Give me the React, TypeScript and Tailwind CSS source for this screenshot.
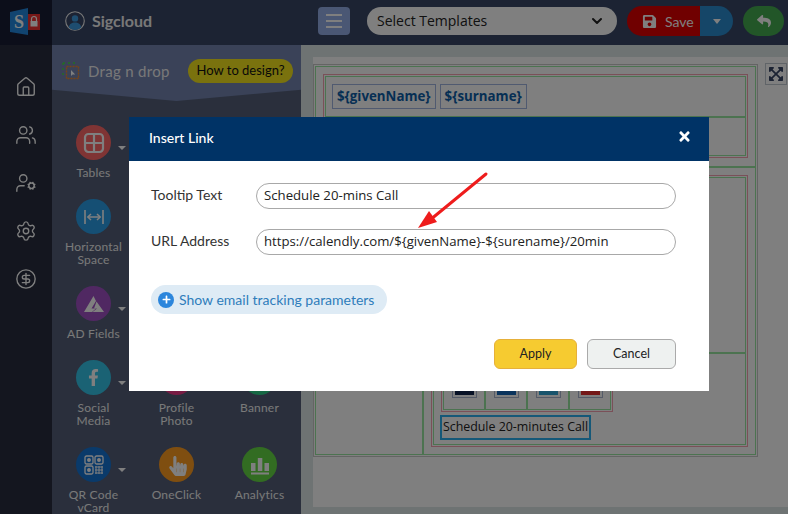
import React from "react";
import { House, Users, UserCog, Settings, CircleDollarSign, ChevronDown } from "lucide-react";
import { FaSave, FaReply, FaTimes, FaExpandArrowsAlt, FaFacebookF, FaHandPointer, FaPlus } from "react-icons/fa";

function Caret() {
  return <div className="absolute left-[42px] top-[21px] w-0 h-0 border-x-[4px] border-x-transparent border-t-[4px] border-t-white" />;
}

function Tool({ label, color, caret, children }: { label?: string[]; color?: string; caret?: boolean; children?: React.ReactNode }) {
  return (
    <div className="flex flex-col items-center pb-[20px]">
      {color ? (
        <div className="relative w-[35px] h-[35px]">
          <div className={"w-[35px] h-[35px] rounded-full flex items-center justify-center text-white " + color}>{children}</div>
          {caret ? <Caret /> : null}
        </div>
      ) : null}
      {label ? (
        <div className="mt-[6px] text-center text-[12px] leading-[13px] text-[#f2f2f2] tracking-[0.2px]">
          {label.map((l) => (
            <div key={l}>{l}</div>
          ))}
        </div>
      ) : null}
    </div>
  );
}

function Swatch({ color }: { color: string }) {
  return (
    <div className="flex-1 border-r-2 last:border-r-0 border-[#98e6a0] pl-[8px] pt-[6px] pb-[11px]">
      <div className="w-[25px] h-[30px] border border-[#aab6d0] p-[2px] bg-white">
        <div className={"h-full " + color} />
      </div>
    </div>
  );
}

export default function App() {
  return (
    <div className="relative w-[788px] h-[514px] overflow-hidden flex font-[Lato,sans-serif]">
      {/* rail */}
      <div className="w-[52px] shrink-0 bg-[#282c3e] flex flex-col items-center">
        <div className="w-full h-[45px] bg-[#181c34] flex items-center justify-center">
          <svg width="34" height="30" viewBox="0 0 34 30">
            <polygon points="1,4 19,0 19,27 1,24" fill="#2288e0" />
            <rect x="19" y="6" width="12" height="16" fill="#f03030" />
            <text x="10" y="20" textAnchor="middle" fontSize="18" fontWeight="700" fill="#fff" fontFamily="Liberation Serif, serif">S</text>
            <path d="M22.5 13v-2a2.5 2.5 0 0 1 5 0v2" fill="none" stroke="#fff" strokeWidth="1.2" />
            <rect x="21.5" y="13" width="7" height="5.5" fill="#fff" />
          </svg>
        </div>
        <div className="flex flex-col items-center gap-[26px] pt-[31px] text-white">
          <House size={22} strokeWidth={1.5} />
          <Users size={22} strokeWidth={1.5} />
          <UserCog size={22} strokeWidth={1.5} />
          <Settings size={22} strokeWidth={1.5} />
          <CircleDollarSign size={22} strokeWidth={1.5} />
        </div>
      </div>

      <div className="flex-1 flex flex-col min-w-0">
        {/* header */}
        <div className="h-[45px] shrink-0 bg-[#384666] flex items-center pb-[3px]">
          <div className="w-[249px] shrink-0 flex items-center pl-[13px] gap-[7px]">
            <svg width="20" height="20" viewBox="0 0 20 20">
              <circle cx="10" cy="10" r="9.3" fill="none" stroke="#f0f0f0" strokeWidth="1.1" />
              <circle cx="10" cy="7.4" r="3.2" fill="#3d9be0" />
              <path d="M3.8 16.5c.6-3.6 3-5 6.2-5s5.6 1.4 6.2 5a9 9 0 0 1-12.4 0z" fill="#3d9be0" />
            </svg>
            <span className="text-[16px] font-bold text-[#f0f0f0]">Sigcloud</span>
          </div>
          <div className="ml-[17px] w-[32px] h-[28px] rounded-[4px] bg-[#94aee8] flex flex-col items-center justify-center gap-[4px]">
            <div className="w-[16px] h-[2px] bg-white" />
            <div className="w-[16px] h-[2px] bg-white" />
            <div className="w-[16px] h-[2px] bg-white" />
          </div>
          <div className="ml-[17px] w-[250px] h-[28px] rounded-full bg-white flex items-center justify-between pl-[10px] pr-[12px] pb-[2px] text-[14px] text-[#222] font-['Open_Sans',sans-serif]">
            <span>Select Templates</span>
            <ChevronDown size={16} strokeWidth={3} className="text-[#222] mt-[2px]" />
          </div>
          <div className="ml-[10px] w-[106px] h-[30px] rounded-full overflow-hidden flex">
            <div className="w-[73px] bg-[#e00000] flex items-center pl-[15px] gap-[8px] text-white text-[14px]">
              <FaSave size={15} />
              <span>Save</span>
            </div>
            <div className="flex-1 bg-[#2a8cd0] flex items-center justify-center">
              <div className="w-0 h-0 border-x-[4px] border-x-transparent border-t-[5px] border-t-white" />
            </div>
          </div>
          <div className="ml-[10px] w-[41px] h-[30px] rounded-full bg-[#44ac50] flex items-center justify-center text-white">
            <FaReply size={14} />
          </div>
        </div>

        <div className="flex-1 flex min-h-0">
          {/* tools panel */}
          <div className="w-[249px] shrink-0 bg-[#545f78] flex flex-col overflow-hidden">
            <div className="h-[56px] shrink-0 bg-[#7484b0] [clip-path:polygon(0_0,100%_0,100%_80%,50%_100%,0_80%)] flex items-start pl-[10px] pt-[14px]">
              <svg width="18" height="19" viewBox="0 0 18 19" className="mt-[2px] shrink-0">
                <path d="M1 2h12M1 2v12" fill="none" stroke="#44dd44" strokeWidth="1.4" strokeDasharray="2 3" />
                <rect x="4.5" y="5.5" width="12" height="12" fill="none" stroke="#f08828" strokeWidth="1.4" strokeDasharray="2 1" />
                <path d="M9 9v6l1.6-1.4h2.6z" fill="#fff" />
              </svg>
              <span className="ml-[8px] w-[74px] shrink-0 mt-[2px] text-[15px] leading-[20px] text-[#f0f0f0] whitespace-nowrap tracking-[0.3px]">Drag n drop</span>
              <div className="ml-[26px] w-[105px] h-[24px] shrink-0 rounded-full bg-[#f4e41c] flex items-center justify-center text-[13px] text-[#111]">How to design?</div>
            </div>
            <div className="grid grid-cols-3 pt-[24px] shrink-0">
              <Tool label={["Tables"]} color="bg-[#ff6868]" caret>
                <svg width="22" height="22" viewBox="0 0 22 22" fill="none" stroke="#fff" strokeWidth="2.2">
                  <rect x="2" y="2" width="18" height="18" rx="3.5" />
                  <path d="M11 2v18M2 11h18" />
                </svg>
              </Tool>
              <div />
              <div />
              <Tool label={["Horizontal", "Space"]} color="bg-[#2a9ee8]">
                <svg width="24" height="20" viewBox="0 0 24 20" fill="none" stroke="#fff" strokeWidth="1.6">
                  <path d="M3 3v14M21 3v14M6 10h12" />
                  <path d="M9 7l-3.2 3L9 13M15 7l3.2 3L15 13" strokeWidth="1.5" />
                </svg>
              </Tool>
              <div />
              <div />
              <Tool label={["AD Fields"]} color="bg-[#a050c4]" caret>
                <svg width="22" height="18" viewBox="0 0 22 18" fill="#fff">
                  <path d="M10.5 1L1 17h8l4-3.5H8.5L13 6z" />
                  <path d="M13.5 6.5L21 17H9.5l4.5-3.5-3-.1z" />
                </svg>
              </Tool>
              <div />
              <div />
              <Tool label={["Social", "Media"]} color="bg-[#34c4e8]" caret>
                <FaFacebookF size={17} />
              </Tool>
              <Tool label={["Profile", "Photo"]} color="bg-[#f03888]" />
              <Tool label={["Banner"]} color="bg-[#2cd088]" />
              <Tool label={["QR Code", "vCard"]} color="bg-[#1474d4]" caret>
                <svg width="20" height="20" viewBox="0 0 20 20" fill="none" stroke="#fff" strokeWidth="1.3">
                  <rect x="1" y="1" width="8" height="8" rx="1.5" />
                  <rect x="11" y="1" width="8" height="8" rx="1.5" />
                  <rect x="1" y="11" width="8" height="8" rx="1.5" />
                  <circle cx="5" cy="5" r="1.3" fill="#fff" />
                  <circle cx="15" cy="5" r="1.3" fill="#fff" />
                  <circle cx="5" cy="15" r="1.3" fill="#fff" />
                  <path d="M11 12h8M11 15h8M11 18h8M12 11v8M15 11v8M18 11v8" strokeWidth="1" />
                </svg>
              </Tool>
              <Tool label={["OneClick"]} color="bg-[#ff9c20]">
                <FaHandPointer size={20} className="ml-[2px] mt-[3px]" />
              </Tool>
              <Tool label={["Analytics"]} color="bg-[#64d844]">
                <svg width="20" height="20" viewBox="0 0 20 20" fill="#fff">
                  <rect x="1" y="8" width="4.5" height="8" />
                  <rect x="7.8" y="3" width="4.5" height="13" />
                  <rect x="14.5" y="8" width="4.5" height="8" />
                  <rect x="1" y="17.5" width="18" height="2" />
                </svg>
              </Tool>
            </div>
          </div>

          {/* canvas */}
          <div className="flex-1 bg-[#dce6e6] pl-[12px] pt-[12px] pb-[7px] flex min-w-0">
            <div className="relative flex-1 bg-white pt-[7px] min-w-0">
              <div className="w-[445px] h-[393px] border border-[#c8c8c8] p-px">
                <div className="h-full border border-[#98e6a0] flex flex-col">
                  <div className="h-[99px] shrink-0 pt-[7px] pb-[8px] pl-[7px] pr-[7px]">
                    <div className="h-full border border-[#f4a0b0] p-px">
                      <div className="h-full border border-[#98e6a0] flex flex-col">
                        <div className="h-[41px] shrink-0 border-b-2 border-[#98e6a0] flex items-start gap-[4px] pl-[6px] pt-[7px] font-['Open_Sans',sans-serif] text-[13.3px] font-bold text-[#0c5ea8]">
                          <div className="h-[25px] px-[4px] border border-[#a0b4e0] flex items-center">{"${givenName}"}</div>
                          <div className="h-[25px] px-[4px] border border-[#a0b4e0] flex items-center">{"${surname}"}</div>
                        </div>
                      </div>
                    </div>
                  </div>
                  <div className="flex-1 flex border-t-2 border-[#98e6a0] min-h-0">
                    <div className="w-[108px] shrink-0 border-r-2 border-[#98e6a0]" />
                    <div className="flex-1 pt-[7px] pl-[7px] pr-[7px] pb-[7px] min-w-0">
                      <div className="h-full border border-[#f4a0b0] p-px">
                        <div className="h-full border border-[#98e6a0] flex flex-col">
                          <div className="h-[176px] shrink-0 border-b-2 border-[#98e6a0]" />
                          <div className="pl-[7px] pt-[5px]">
                            <div className="w-[172px] border border-[#f4a0b0] p-px">
                              <div className="border border-[#98e6a0] flex">
                                <Swatch color="bg-[#10244c]" />
                                <Swatch color="bg-[#1466b8]" />
                                <Swatch color="bg-[#30a8d8]" />
                                <Swatch color="bg-[#e83030]" />
                              </div>
                            </div>
                            <div className="-ml-px mt-[3px] w-[151px] h-[25px] border-2 border-[#2ab0f0] flex items-center justify-center font-['Open_Sans',sans-serif] text-[12.4px] whitespace-nowrap text-[#222]">Schedule 20-minutes Call</div>
                          </div>
                        </div>
                      </div>
                    </div>
                  </div>
                </div>
              </div>
              <div className="absolute left-[452px] top-[6px] w-[22px] h-[22px] border border-[#c0c8d0] flex items-center justify-center text-[#384666]">
                <FaExpandArrowsAlt size={16} />
              </div>
            </div>
          </div>
        </div>
      </div>

      {/* backdrop and dialog */}
      <div className="absolute inset-0 bg-black/50 pl-[129px] pt-[117px]">
        <div className="relative w-[580px] h-[274px] bg-white">
          <div className="h-[44px] bg-[#003366] flex items-center justify-between pl-[20px] pr-[17px] text-white">
            <span className="text-[14px] font-medium -mt-[3px]">Insert Link</span>
            <FaTimes size={15} className="-mt-[5px]" />
          </div>
          <div className="pl-[22px] pt-[22px]">
            <div className="flex items-center h-[26px]">
              <span className="w-[105px] text-[14px] text-[#333] -mt-[3px]">Tooltip Text</span>
              <div className="w-[420px] h-[26px] rounded-[13px] border border-[#a8a8a8] flex items-center pl-[7px] pb-[1px] text-[13.2px] text-[#222] font-['Open_Sans',sans-serif]">Schedule 20-mins Call</div>
            </div>
            <div className="flex items-center h-[26px] mt-[20px]">
              <span className="w-[105px] text-[14px] text-[#333] -mt-[3px]">URL Address</span>
              <div className="w-[420px] h-[26px] rounded-[13px] border border-[#a8a8a8] flex items-center pl-[7px] pb-[1px] text-[13.2px] text-[#222] font-['Open_Sans',sans-serif] whitespace-nowrap">{"https://calendly.com/${givenName}-${surename}/20min"}</div>
            </div>
            <div className="mt-[30px] w-[236px] h-[29px] rounded-full bg-[#deebf5] flex items-center pl-[7px] gap-[5px] text-[14px] text-[#2f7dbb]">
              <div className="w-[16px] h-[16px] rounded-full bg-[#2c86dc] flex items-center justify-center text-white">
                <FaPlus size={9} />
              </div>
              <span>Show email tracking parameters</span>
            </div>
            <div className="flex justify-end gap-[10px] mt-[25px] w-[525px]">
              <div className="w-[83px] h-[30px] rounded-[6px] bg-[#f6cb30] border border-[#e6b03a] flex items-center justify-center text-[12.5px] text-[#222]">Apply</div>
              <div className="w-[89px] h-[30px] rounded-[6px] bg-[#eef1f0] border border-[#aaaaaa] flex items-center justify-center text-[12.5px] text-[#222]">Cancel</div>
            </div>
          </div>
          <svg className="absolute left-[285px] top-[52px]" width="80" height="65" viewBox="0 0 80 65">
            <path d="M72 5L16 51" stroke="#ee1c1c" strokeWidth="3" strokeLinecap="round" />
            <polygon points="4,59 15,42 23,53" fill="#ee1c1c" />
          </svg>
        </div>
      </div>
    </div>
  );
}
